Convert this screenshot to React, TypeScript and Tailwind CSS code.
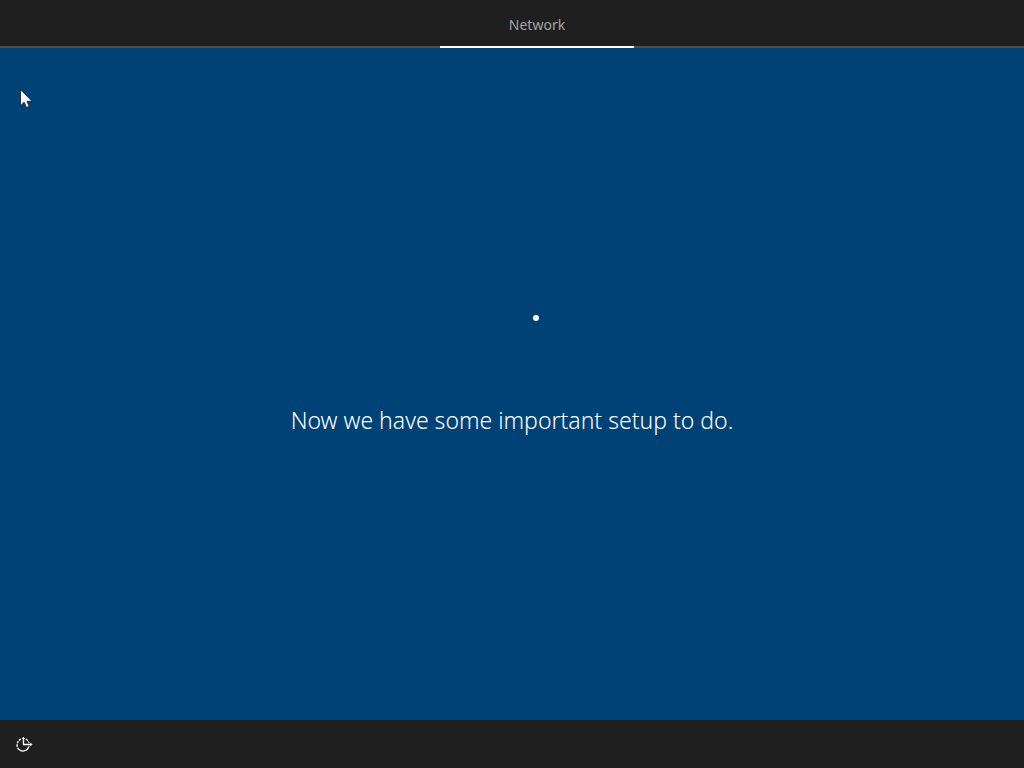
import React from 'react';

const tabs = [{ id: 'network', label: 'Network' }];

const App: React.FC = () => {
  return (
    <div className="relative min-h-screen flex flex-col bg-[#004275] text-white font-['Noto_Sans','Open_Sans',sans-serif]">
      <Header active="network" />

      <main className="flex-1 flex flex-col items-center justify-center gap-[30px] pb-[22px]">
        <ProgressRing />
        <h1 className="text-[23px] leading-8 font-light text-center">Now we have some important setup to do.</h1>
      </main>

      <footer className="h-12 flex items-center bg-[#1f1f1f]">
        <button type="button" aria-label="Ease of access" className="h-12 w-12 flex items-center justify-center">
          <EaseOfAccessIcon />
        </button>
      </footer>

      <Cursor />
    </div>
  );
};

const Header: React.FC<{ active: string }> = ({ active }) => (
  <header className="h-12 flex justify-center bg-[#1f1f1f] border-b-2 border-[#4c4c4c] pl-[50px]">
    {tabs.map(tab => (
      <button
        key={tab.id}
        type="button"
        className={`-mb-0.5 w-[194px] border-b-2 pt-1 text-sm text-[#a3a3a3] ${tab.id === active ? 'border-white' : 'border-transparent'}`}
      >
        {tab.label}
      </button>
    ))}
  </header>
);

const ProgressRing: React.FC = () => (
  <svg className="w-16 h-16" viewBox="0 0 64 64" role="img" aria-label="Loading">
    <circle cx="56" cy="8" r="3" fill="white" />
  </svg>
);

// Dashed wheel with an arrow up and an arrow to the right
const EaseOfAccessIcon: React.FC = () => (
  <svg className="w-[18px] h-[18px]" viewBox="0 0 18 18" fill="none" stroke="white" aria-hidden="true">
    <path d="M14 11.5A6.3 6.3 0 0 1 4 14.6" strokeWidth="1.3" />
    <path d="M4 14.6A6.3 6.3 0 0 1 6 4.2M10.8 4.1A6.3 6.3 0 0 1 13.8 7.8" strokeWidth="1.4" strokeDasharray="2.4 1" />
    <path d="M8.5 2.5v7H16.5" strokeWidth="1.3" />
    <path d="M7 4 8.5 2.5 10 4M15 7.7l1.8 1.8-1.8 1.8" strokeWidth="1" />
  </svg>
);

const Cursor: React.FC = () => (
  <svg className="absolute left-5 top-[89px] w-[13px] h-[19px] pointer-events-none" viewBox="0 0 13 19" aria-hidden="true">
    <path d="M.5.5v16.2L4.2 13.2l2.3 5.3 2.7-1.2-2.3-5H12z" fill="white" stroke="#0a1a2a" strokeWidth=".8" />
  </svg>
);

export default App;
